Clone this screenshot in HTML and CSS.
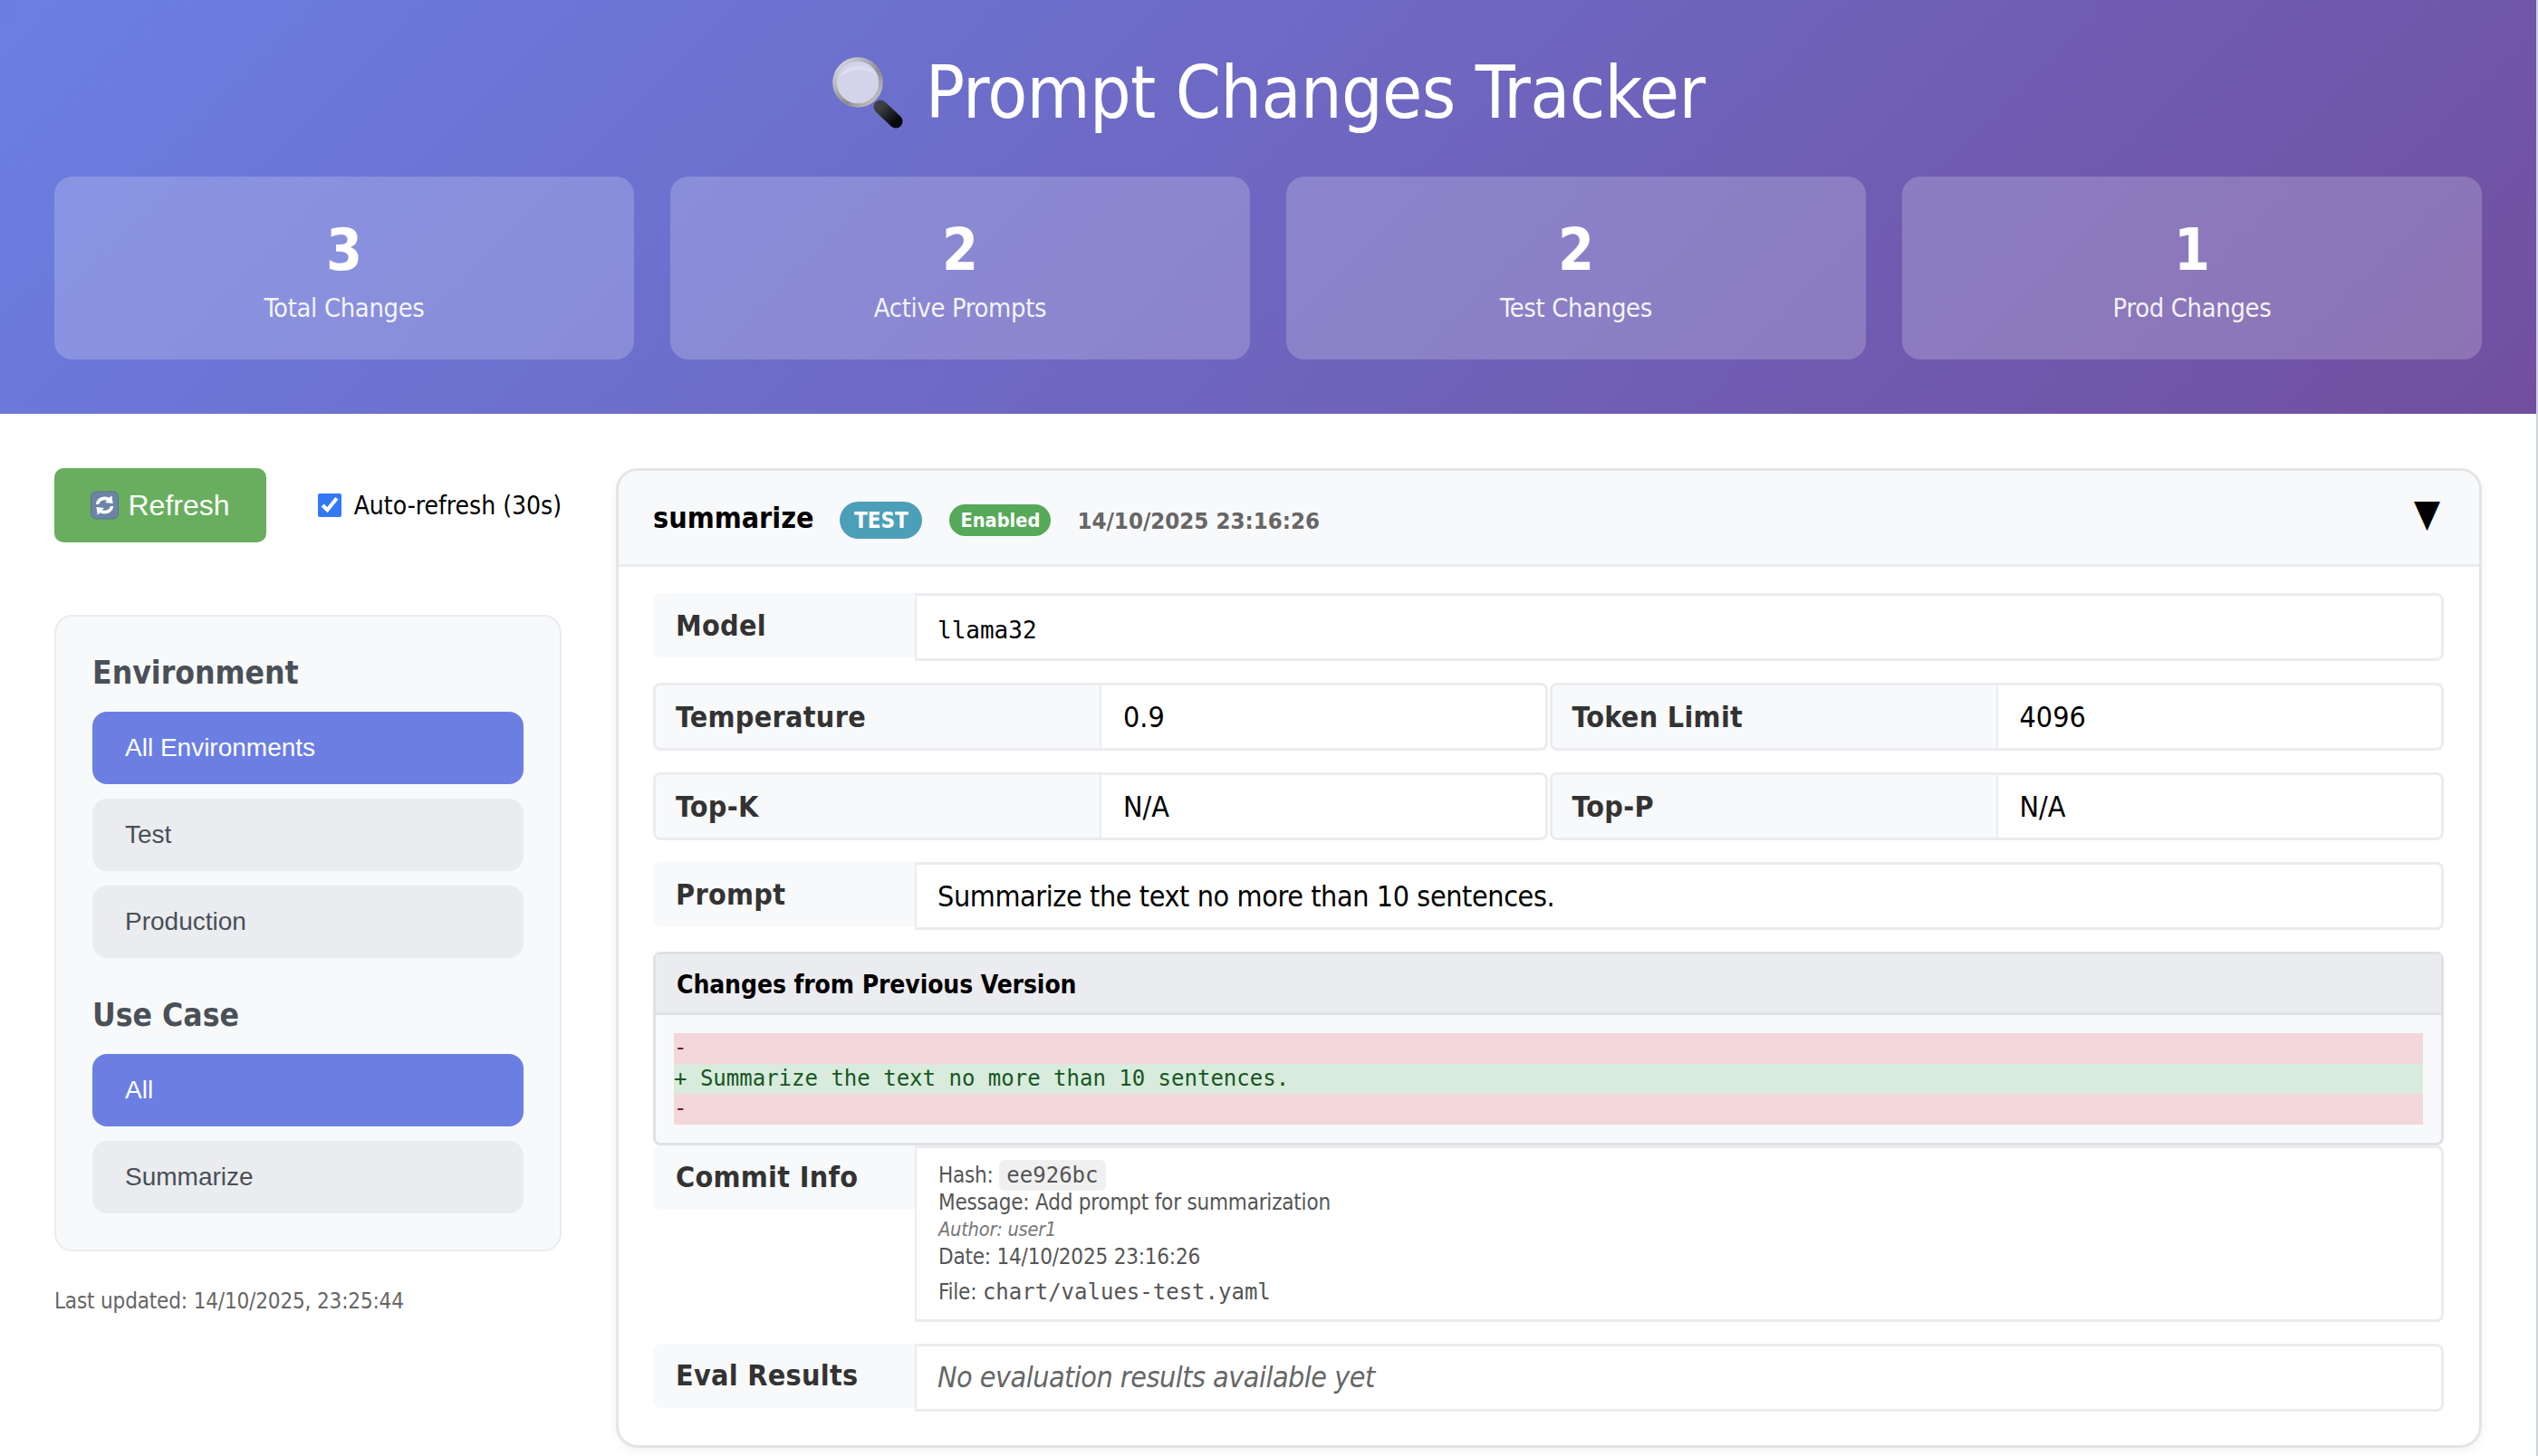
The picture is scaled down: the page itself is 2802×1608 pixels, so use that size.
FILE: index.html
```html
<!DOCTYPE html>
<html lang="en">
<head>
  <meta charset="UTF-8" />
  <title>Prompt Changes Tracker</title>
  <link rel="stylesheet" href="styles.css">
</head>
<body>
  <header class="header">
    <h1 class="title">
      <svg class="title-icon" viewBox="0 0 80 80" aria-hidden="true">
        <defs>
          <linearGradient id="ringGrad" x1="0" y1="0" x2="1" y2="1">
            <stop offset="0" stop-color="#dfe3ea" />
            <stop offset="0.6" stop-color="#8b8b8f" />
            <stop offset="1" stop-color="#d5d5d8" />
          </linearGradient>
          <linearGradient id="handleGrad" x1="0" y1="0" x2="1" y2="1">
            <stop offset="0" stop-color="#3b4044" />
            <stop offset="1" stop-color="#08090b" />
          </linearGradient>
        </defs>
        <line x1="54" y1="55" x2="71" y2="71" stroke="url(#handleGrad)" stroke-width="15" stroke-linecap="round" />
        <circle cx="29" cy="28" r="25.5" fill="#d3d3ea" stroke="url(#ringGrad)" stroke-width="4.5" />
        <path d="M9 22 C14 8 40 4 50 20 C38 12 20 13 9 22 Z" fill="#dedef0" />
      </svg>
      Prompt Changes Tracker
    </h1>
    <div class="stats">
      <div class="stat"><div class="stat-number">3</div><div class="stat-label">Total Changes</div></div>
      <div class="stat"><div class="stat-number">2</div><div class="stat-label">Active Prompts</div></div>
      <div class="stat"><div class="stat-number">2</div><div class="stat-label">Test Changes</div></div>
      <div class="stat"><div class="stat-number">1</div><div class="stat-label">Prod Changes</div></div>
    </div>
  </header>

  <main class="main">
    <aside class="sidebar">
      <div class="controls">
        <button class="refresh-btn" type="button">
          <svg class="refresh-icon" viewBox="0 0 32 32" aria-hidden="true">
            <rect x="0.5" y="0.5" width="31" height="31" rx="6" fill="#6d84a6" stroke="#5a7092" />
            <path d="M6 15 C6.5 8 15 4 21 7.5 L24 5 L25.5 14 L16.5 13 L19 10.5 C15 9 10.5 10.5 9.5 15 Z" fill="#fff" />
            <path d="M26 17 C25.5 24 17 28 11 24.5 L8 27 L6.5 18 L15.5 19 L13 21.5 C17 23 21.5 21.5 22.5 17 Z" fill="#fff" />
          </svg>
          Refresh
        </button>
        <label class="auto-refresh"><input type="checkbox" checked /> Auto-refresh (30s)</label>
      </div>

      <div class="filters">
        <h3 class="filter-title">Environment</h3>
        <button class="filter-btn active" type="button">All Environments</button>
        <button class="filter-btn" type="button">Test</button>
        <button class="filter-btn" type="button">Production</button>
        <h3 class="filter-title second">Use Case</h3>
        <button class="filter-btn active" type="button">All</button>
        <button class="filter-btn" type="button">Summarize</button>
      </div>

      <div class="last-updated">Last updated: 14/10/2025, 23:25:44</div>
    </aside>

    <section class="change-card">
      <div class="card-header">
        <span class="prompt-name">summarize</span>
        <span class="badge badge-env">TEST</span>
        <span class="badge badge-state">Enabled</span>
        <span class="timestamp">14/10/2025 23:16:26</span>
        <span class="toggle">▼</span>
      </div>

      <div class="card-body">
        <div class="field">
          <div class="field-label">Model</div>
          <div class="field-value mono-value">llama32</div>
        </div>

        <div class="pair-row">
          <div class="pair"><div class="pair-label">Temperature</div><div class="pair-value">0.9</div></div>
          <div class="pair"><div class="pair-label">Token Limit</div><div class="pair-value">4096</div></div>
        </div>

        <div class="pair-row">
          <div class="pair"><div class="pair-label">Top-K</div><div class="pair-value">N/A</div></div>
          <div class="pair"><div class="pair-label">Top-P</div><div class="pair-value">N/A</div></div>
        </div>

        <div class="field">
          <div class="field-label">Prompt</div>
          <div class="field-value">Summarize the text no more than 10 sentences.</div>
        </div>

        <div class="diff">
          <div class="diff-header">Changes from Previous Version</div>
          <div class="diff-body">
            <div class="diff-line removed">-</div>
            <div class="diff-line added">+ Summarize the text no more than 10 sentences.</div>
            <div class="diff-line removed">-</div>
          </div>
        </div>

        <div class="field commit-field">
          <div class="field-label">Commit Info</div>
          <div class="field-value commit">
            <div>Hash: <code class="hash">ee926bc</code></div>
            <div>Message: Add prompt for summarization</div>
            <div class="author">Author: user1</div>
            <div>Date: 14/10/2025 23:16:26</div>
            <div class="file">File: <code>chart/values-test.yaml</code></div>
          </div>
        </div>

        <div class="field last">
          <div class="field-label">Eval Results</div>
          <div class="field-value no-results">No evaluation results available yet</div>
        </div>
      </div>
    </section>
  </main>
</body>
</html>
```

FILE: styles.css
```css
* {
  box-sizing: border-box;
}

html {
  height: 1608px;
  overflow: hidden;
  background: #d0d2e0;
}

body {
  width: 2800px;
  height: 1608px;
  margin: 0;
  font-family: "DejaVu Sans", sans-serif;
  font-stretch: condensed;
  color: #000;
  background: #fff;
}

/* Header */
.header {
  height: 457px;
  padding: 0 60px;
  color: #fff;
  background: linear-gradient(135deg, #6b7fe3 0%, #714f9f 100%);
}

.title {
  margin: 0;
  height: 195px;
  display: flex;
  align-items: center;
  justify-content: center;
  gap: 24px;
  padding-top: 10px;
  font-size: 80px;
  font-weight: 400;
  letter-spacing: -0.64px;
}

.title-icon {
  width: 80px;
  height: 80px;
}

.stats {
  display: grid;
  grid-template-columns: repeat(4, 1fr);
  gap: 40px;
}

.stat {
  height: 202px;
  padding-top: 42px;
  text-align: center;
  border-radius: 20px;
  background: rgba(255, 255, 255, 0.2);
}

.stat-number {
  font-size: 64px;
  font-weight: 700;
  line-height: 78px;
}

.stat-label {
  margin-top: 7px;
  font-size: 28.8px;
  line-height: 36px;
  letter-spacing: -0.3px;
  opacity: 0.9;
}

/* Main layout */
.main {
  display: flex;
  gap: 60px;
  padding: 60px 60px 0;
}

.sidebar {
  flex: 0 0 560px;
}

.controls {
  display: flex;
  align-items: center;
  justify-content: space-between;
  height: 82px;
}

.refresh-btn {
  display: flex;
  align-items: center;
  justify-content: center;
  gap: 10px;
  width: 234px;
  height: 82px;
  padding: 0;
  border: 0;
  border-radius: 10px;
  color: #fff;
  background: #69ae5f;
  font-family: "Liberation Sans", Arial, sans-serif;
  font-size: 32px;
}

.refresh-icon {
  width: 31px;
  height: 32px;
}

.auto-refresh {
  display: flex;
  align-items: center;
  gap: 14px;
  font-size: 28px;
}

.auto-refresh input {
  width: 26px;
  height: 26px;
  margin: 0;
  accent-color: #3478f6;
}

.filters {
  margin-top: 80px;
  padding: 40px;
  border: 2px solid #ebecef;
  border-radius: 20px;
  background: #f8f9fa;
}

.filter-title {
  margin: 0 0 21px;
  font-size: 35.2px;
  line-height: 44px;
  font-weight: 700;
  color: #495057;
}

.filter-title.second {
  margin-top: 41px;
}

.filter-btn {
  display: block;
  width: 100%;
  height: 80px;
  margin-bottom: 16px;
  padding: 0 36px;
  border: 0;
  border-radius: 16px;
  text-align: left;
  color: #495057;
  background: #ebecef;
  font-family: "Liberation Sans", Arial, sans-serif;
  font-size: 28px;
}

.filter-btn:last-child {
  margin-bottom: 0;
}

.filter-btn.active {
  color: #fff;
  background: #6b7fe3;
}

.last-updated {
  margin-top: 41px;
  font-size: 24px;
  letter-spacing: -0.15px;
  color: #666;
}

/* Change card */
.change-card {
  flex: 1;
  height: 1082px;
  border: 3px solid #e3e4e6;
  border-radius: 24px;
  overflow: hidden;
  box-shadow: 0 4px 12px rgba(0, 0, 0, 0.05);
}

.card-header {
  display: flex;
  align-items: center;
  height: 106px;
  padding: 6px 38px 0;
  border-bottom: 3px solid #ebecef;
  background: #f8f9fa;
}

.prompt-name {
  margin-top: -5px;
  margin-right: 29px;
  font-size: 32px;
  font-weight: 700;
}

.badge {
  display: flex;
  align-items: center;
  justify-content: center;
  color: #fff;
  font-weight: 700;
}

.badge-env {
  width: 91px;
  height: 41px;
  margin-right: 30px;
  border-radius: 21px;
  font-size: 24px;
  background: #4c9fb8;
}

.badge-state {
  width: 112px;
  height: 35px;
  margin-right: 29px;
  border-radius: 18px;
  font-size: 21.6px;
  background: #55a958;
}

.timestamp {
  font-size: 25.6px;
  font-weight: 700;
  color: #666;
}

.toggle {
  margin: -16px 5px 0 auto;
  font-size: 42px;
  color: #000;
}

.card-body {
  padding: 29px 39px 0 38px;
}

.field {
  display: flex;
  align-items: flex-start;
  margin-bottom: 24px;
}

.field-label {
  flex: 0 0 289px;
  height: 71px;
  padding: 0 25px;
  display: flex;
  align-items: center;
  border-radius: 8px 0 0 8px;
  background: #f8f9fa;
  color: #333;
  font-size: 32px;
  font-weight: 700;
  letter-spacing: 0.3px;
}

.field-value {
  flex: 1;
  min-height: 75px;
  padding: 0 23px;
  display: flex;
  align-items: center;
  border: 3px solid #ebecef;
  border-left-width: 2px;
  border-radius: 0 8px 8px 0;
  font-size: 32px;
  letter-spacing: -0.4px;
}

.mono-value {
  padding-top: 6px;
  font-family: "DejaVu Sans Mono", monospace;
  font-stretch: normal;
  font-size: 26px;
  letter-spacing: 0;
}

.pair-row {
  display: flex;
  gap: 2px;
  margin-bottom: 24px;
}

.pair {
  flex: 1;
  height: 75px;
  display: flex;
  border: 3px solid #ebecef;
  border-radius: 8px;
}

.pair-label {
  flex: 0 0 492px;
  padding: 0 22px;
  display: flex;
  align-items: center;
  border-right: 2px solid #ebecef;
  border-radius: 6px 0 0 6px;
  background: #f8f9fa;
  color: #333;
  font-size: 32px;
  font-weight: 700;
  letter-spacing: 0.3px;
}

.pair-value {
  flex: 1;
  padding: 0 24px;
  display: flex;
  align-items: center;
  font-size: 32px;
}

/* Diff */
.diff {
  border: 3px solid #dfe1e5;
  border-radius: 8px;
  background: #f8f9fa;
}

.diff-header {
  height: 67px;
  padding: 2px 23px 0;
  display: flex;
  align-items: center;
  border-bottom: 3px solid #dfe1e5;
  background: #ebecef;
  font-size: 28px;
  font-weight: 700;
  letter-spacing: -0.1px;
}

.diff-body {
  padding: 20px;
  font-family: "DejaVu Sans Mono", monospace;
  font-stretch: normal;
  font-size: 24px;
  line-height: 33.6px;
}

.diff-line.removed {
  color: #721c24;
  background: #f3d7db;
}

.diff-line.added {
  color: #155724;
  background: #d9ebdc;
}

/* Commit info */
.commit-field {
  margin-bottom: 24px;
}

.commit {
  display: block;
  padding: 15px 24px;
  font-size: 24px;
  line-height: 30px;
  letter-spacing: -0.2px;
  color: #555;
}

.commit code {
  font-family: "DejaVu Sans Mono", monospace;
  font-stretch: normal;
  font-size: 24px;
  letter-spacing: 0;
}

.hash {
  padding: 3px 8px;
  border-radius: 6px;
  background: #f0f0f0;
}

.author {
  font-style: italic;
  font-size: 21.6px;
  color: #777;
}

.file {
  margin-top: 9px;
}

.no-results {
  font-style: italic;
  letter-spacing: -0.5px;
  color: #666;
}

.field.last {
  margin-bottom: 0;
}
```
